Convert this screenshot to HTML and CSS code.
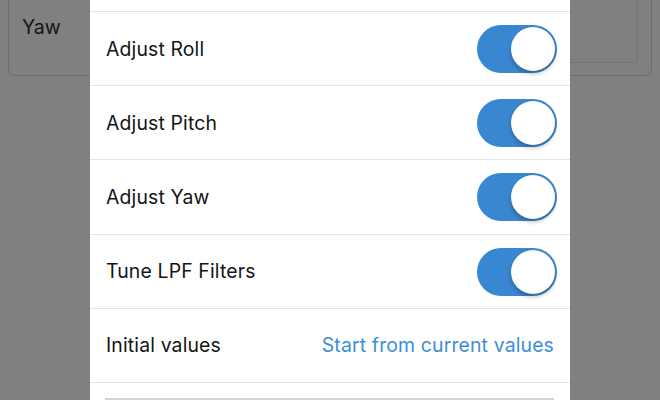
FILE: index.html
```html
<!DOCTYPE html>
<html>
<head>
<meta charset="utf-8">
<link rel="stylesheet" href="styles.css">
</head>
<body>
<div class="backdrop">
  <div class="bg-card">
    <div class="bg-label">Yaw</div>
    <div class="bg-input"></div>
  </div>
</div>
<div class="modal">
  <div class="row"><span class="label">Adjust Roll</span><span class="toggle"><span class="knob"></span></span></div>
  <div class="row"><span class="label">Adjust Pitch</span><span class="toggle"><span class="knob"></span></span></div>
  <div class="row"><span class="label">Adjust Yaw</span><span class="toggle"><span class="knob"></span></span></div>
  <div class="row"><span class="label">Tune LPF Filters</span><span class="toggle"><span class="knob"></span></span></div>
  <div class="row"><span class="label">Initial values</span><span class="link">Start from current values</span></div>
  <div class="row last"><div class="gray-bar"></div></div>
</div>
</body>
</html>
```
FILE: styles.css
```css
html, body {
  margin: 0;
  padding: 0;
  width: 660px;
  height: 400px;
  overflow: hidden;
  background: #808080;
  font-family: "Inter", "Open Sans", sans-serif;
}
.backdrop {
  padding: 0 8px;
}
.bg-card {
  margin-top: -20px;
  height: 96px;
  border: 1.5px solid #6c6c6c;
  border-top: none;
  border-radius: 0 0 7px 7px;
  display: flex;
  justify-content: space-between;
  box-sizing: border-box;
  padding: 0 13px 12px 13px;
}
.bg-label {
  padding-top: 35px;
  font-size: 19.5px;
  color: #151515;
}
.bg-input {
  width: 100px;
  border: 1.5px solid #747474;
  border-top: none;
  border-radius: 0 0 5px 5px;
}
.modal {
  position: absolute;
  left: 90px;
  top: 0;
  width: 480px;
  height: 400px;
  background: #ffffff;
  padding-top: 11px;
  box-sizing: border-box;
  overflow: hidden;
}
.row {
  height: 74.2px;
  box-sizing: border-box;
  border-top: 1px solid #e4e4e4;
  display: flex;
  align-items: center;
  justify-content: space-between;
  padding: 0 13px 0 16px;
}
.row.last {
  align-items: flex-start;
  padding: 15px 16px 0 15px;
}
.label {
  font-size: 19.4px;
  color: #141414;
  letter-spacing: 0.15px;
}
.link {
  font-size: 19.4px;
  color: #3c8ed6;
  margin-right: 3px;
  letter-spacing: 0.15px;
}
.toggle {
  width: 80px;
  height: 48px;
  border-radius: 24px;
  background: #3987d0;
  position: relative;
  margin-top: 1px;
}
.knob {
  position: absolute;
  right: 2px;
  top: 2px;
  width: 44px;
  height: 44px;
  border-radius: 50%;
  background: #ffffff;
  box-shadow: 0 3px 4px rgba(0,0,0,0.25);
}
.gray-bar {
  width: 100%;
  height: 20px;
  background: #d3d3d3;
}
```
